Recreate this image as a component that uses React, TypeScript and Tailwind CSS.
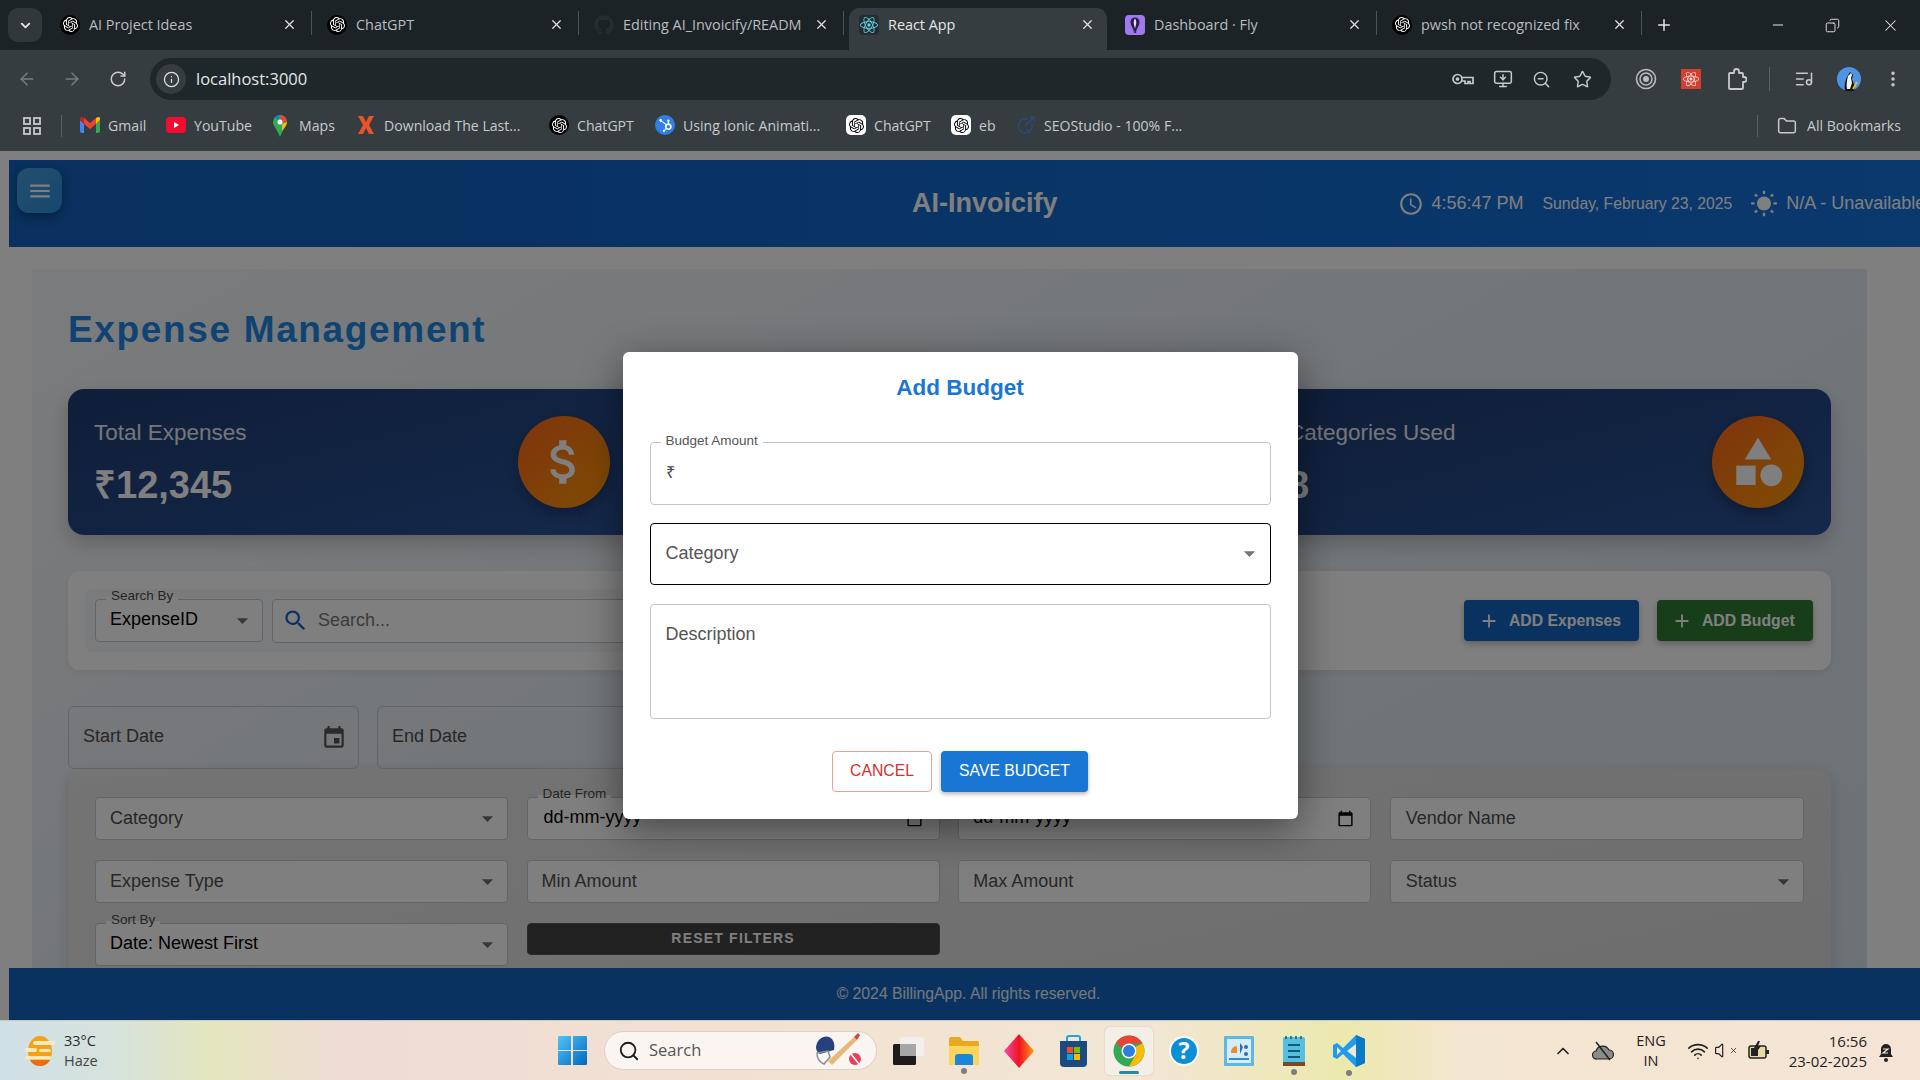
import type { ReactNode } from 'react';
import {
  ArrowLeft,
  ArrowRight,
  ChevronDown,
  ChevronUp,
  Copy,
  EllipsisVertical,
  Folder,
  Info,
  ListMusic,
  Minus,
  MonitorDown,
  Plus,
  RotateCw,
  Search,
  Star,
  Volume,
  Wifi,
  X,
  ZoomOut,
} from 'lucide-react';
import {
  MdAccessTime,
  MdAdd,
  MdArrowDropDown,
  MdAttachMoney,
  MdCalendarToday,
  MdCategory,
  MdEvent,
  MdMenu,
  MdSearch,
  MdWbSunny,
} from 'react-icons/md';
import { FaGithub } from 'react-icons/fa';
import { SiHubspot, SiOpenai, SiReact } from 'react-icons/si';

const UI_FONT = "font-['Open_Sans','Noto_Sans',sans-serif]";

function GptIcon({ light = false }: { light?: boolean }) {
  return (
    <span
      className={
        light
          ? 'flex h-5 w-5 shrink-0 items-center justify-center rounded-[5px] bg-white text-black'
          : 'flex h-5 w-5 shrink-0 items-center justify-center rounded-full bg-black text-white'
      }
    >
      <SiOpenai size={15} />
    </span>
  );
}

function FlyIcon() {
  return (
    <svg width="20" height="20" viewBox="0 0 20 20" className="shrink-0">
      <rect width="20" height="20" rx="4" fill="#a079ec" />
      <path d="M10 2.5c3 0 4.5 2.4 4.5 5 0 3-3 6-3.2 8.5H8.7C8.500 13.500 5.500 10.500 5.500 7.500c0-2.600 1.500-5 4.500-5z" fill="#2a1b4d" />
      <path d="M10 3.500c-.9 1.200-1.300 2.600-1.300 4s.6 3.500 1.300 6c.7-2.500 1.300-4.600 1.300-6s-.4-2.800-1.300-4z" fill="#e6dcfb" />
      <rect x="8.800" y="16.200" width="2.400" height="1.600" fill="#2a1b4d" />
    </svg>
  );
}

function Tab({
  icon,
  title,
  active = false,
  sep = true,
  width = 267,
  inset = 10,
}: {
  icon: ReactNode;
  title: string;
  active?: boolean;
  sep?: boolean;
  width?: number;
  inset?: number;
}) {
  return (
    <div
      className={
        active
          ? 'relative flex h-[42px] shrink-0 items-center rounded-t-[10px] bg-[#353d40] pb-[9px] pr-[12px] text-[#e4e6e7]'
          : 'relative flex h-[42px] shrink-0 items-center pb-[9px] pr-[20px] text-[#b9bdbf]'
      }
      style={{ width, paddingLeft: inset }}
    >
      {icon}
      <span className="ml-[9px] min-w-0 flex-1 overflow-hidden whitespace-nowrap text-[14.400px]">{title}</span>
      <X size={15} strokeWidth={2} className="ml-1 shrink-0 text-[#dfe1e2]" />
      {sep && <span className="absolute right-[5px] top-[3px] h-[24px] w-[1px] bg-[#4b5356]" />}
    </div>
  );
}

function Bookmark({ icon, label, className }: { icon: ReactNode; label: string; className: string }) {
  return (
    <div className={`flex shrink-0 items-center ${className}`}>
      {icon}
      <span className="whitespace-nowrap text-[14.100px] text-[#c6cacc]">{label}</span>
    </div>
  );
}

function ChromeBar() {
  return (
    <div className={`h-[151px] shrink-0 bg-[#353d40] ${UI_FONT}`}>
      <div className="flex h-[50px] items-end bg-[#1b2327] pl-[8px]">
        <div className="mb-[8px] flex h-[34px] w-[34px] shrink-0 items-center justify-center rounded-[10px] bg-[#30383b] text-[#e4e6e7]">
          <ChevronDown size={15} strokeWidth={3} />
        </div>
        <div className="ml-[8px] flex">
          <Tab icon={<GptIcon />} title="AI Project Ideas" />
          <Tab icon={<GptIcon />} title="ChatGPT" />
          <Tab icon={<FaGithub size={20} className="shrink-0 text-[#262d30]" />} title="Editing AI_Invoicify/READM" width={265} />
          <Tab
            active
            sep={false}
            width={258}
            icon={
              <span className="flex h-5 w-5 shrink-0 items-center justify-center rounded-[4px] bg-[#242c30] text-[#63d4ea]">
                <SiReact size={18} />
              </span>
            }
            title="React App"
          />
          <Tab icon={<FlyIcon />} title="Dashboard · Fly" width={275} inset={18} />
          <Tab icon={<GptIcon />} title="pwsh not recognized fix" width={265} />
        </div>
        <Plus size={18} strokeWidth={2} className="mb-[16px] ml-[8px] shrink-0 text-[#e4e6e7]" />
        <Minus size={16} strokeWidth={1.5} className="mb-[17px] ml-[97px] shrink-0 text-[#e4e6e7]" />
        <Copy size={15} strokeWidth={1.5} className="mb-[17px] ml-[39px] shrink-0 scale-x-[-1] text-[#e4e6e7]" />
        <X size={19} strokeWidth={1.3} className="mb-[15px] ml-[41px] shrink-0 text-[#e4e6e7]" />
      </div>

      <div className="flex h-[58px] items-center py-[8px]">
        <ArrowLeft size={20} strokeWidth={1.8} className="ml-[17px] shrink-0 text-[#767c7f]" />
        <ArrowRight size={20} strokeWidth={1.8} className="ml-[25px] shrink-0 text-[#767c7f]" />
        <RotateCw size={18} strokeWidth={2} className="ml-[27px] shrink-0 text-[#c9cccd]" />
        <div className="ml-[23px] flex h-[42px] w-[1461px] shrink-0 items-center rounded-full bg-[#1e272a] pl-[6px]">
          <span className="flex h-[30px] w-[30px] items-center justify-center rounded-full bg-[#353d40] text-[#dfe1e2]">
            <Info size={17} strokeWidth={1.8} />
          </span>
          <span className="ml-[10px] text-[16.500px] text-[#e4e6e7]">localhost:3000</span>
          <svg width="22" height="14" viewBox="0 0 22 14" fill="none" stroke="#c6cacc" strokeWidth="1.700" className="ml-[1145px] shrink-0">
            <circle cx="5.500" cy="7" r="4.500" />
            <circle cx="5.500" cy="7" r="1" fill="#c6cacc" />
            <path d="M10 5.500h11v6h-3V9.500h-2v2h-3V9h-3" />
          </svg>
          <MonitorDown size={20} strokeWidth={1.8} className="ml-[19px] shrink-0 text-[#c6cacc]" />
          <ZoomOut size={19} strokeWidth={1.8} className="ml-[19px] shrink-0 text-[#c6cacc]" />
          <Star size={19} strokeWidth={1.8} className="ml-[22px] shrink-0 text-[#c6cacc]" />
        </div>
        <svg width="22" height="22" viewBox="0 0 22 22" fill="none" stroke="#b9bdbf" className="ml-[24px] shrink-0">
          <circle cx="11" cy="11" r="9.500" strokeWidth="1.600" />
          <circle cx="11" cy="11" r="6" strokeWidth="1.500" />
          <circle cx="11" cy="11" r="3" fill="#b9bdbf" stroke="none" />
        </svg>
        <span className="ml-[24px] flex h-5 w-5 shrink-0 items-center justify-center bg-[#d23f31] text-[#f4d8d4]">
          <SiReact size={16} />
        </span>
        <svg width="20" height="22" viewBox="0 0 20 22" fill="none" stroke="#c6cacc" strokeWidth="1.800" strokeLinejoin="round" className="ml-[26px] shrink-0">
          <path d="M2 6a1 1 0 0 1 1-1h4V3.500a2.500 2.500 0 0 1 5 0V5h3a1 1 0 0 1 1 1v3h1a2.500 2.500 0 0 1 0 5h-1v6a1 1 0 0 1-1 1H3a1 1 0 0 1-1-1z" />
        </svg>
        <span className="ml-[22px] h-[24px] w-[1px] shrink-0 bg-[#596164]" />
        <ListMusic size={20} strokeWidth={1.8} className="ml-[24px] shrink-0 text-[#c6cacc]" />
        <svg width="24" height="24" viewBox="0 0 24 24" className="ml-[23px] shrink-0">
          <circle cx="12" cy="12" r="12" fill="#4f93e6" />
          <path d="M8 24c-1-5 0-10 2-14l3-5 3 3-1 4 3 8-1 4z" fill="#111" />
          <path d="M11 9l3-3 1 2-1 3 1 5-2 6h-3c-1-4 0-9 1-13z" fill="#f4f4f4" />
          <path d="M16 22l4-7" stroke="#e8c020" strokeWidth="2" />
        </svg>
        <EllipsisVertical size={20} strokeWidth={2.2} className="ml-[22px] shrink-0 text-[#c6cacc]" />
      </div>

      <div className="flex h-[42px] items-center pb-[7px]">
        <svg width="18" height="18" viewBox="0 0 18 18" fill="none" stroke="#c6cacc" strokeWidth="1.800" className="ml-[23px] shrink-0">
          <rect x="1" y="1" width="6" height="6" />
          <rect x="11" y="1" width="6" height="6" />
          <rect x="1" y="11" width="6" height="6" />
          <rect x="11" y="11" width="6" height="6" />
        </svg>
        <span className="ml-[20px] mr-[18px] h-[22px] w-[1px] shrink-0 bg-[#596164]" />
        <Bookmark
          className="w-[86px] gap-2"
          label="Gmail"
          icon={
            <svg width="20" height="16" viewBox="0 0 20 16" className="shrink-0">
              <path d="M0 3v11a2 2 0 0 0 2 2h2V7z" fill="#4285f4" />
              <path d="M20 3v11a2 2 0 0 1-2 2h-2V7z" fill="#34a853" />
              <path d="M16 7V1l2-1a2 2 0 0 1 2 3z" fill="#fbbc04" />
              <path d="M4 7V1l6 5 6-5v6l-6 5z" fill="#ea4335" />
              <path d="M0 3a2 2 0 0 1 2-3l2 1v6z" fill="#c5221f" />
            </svg>
          }
        />
        <Bookmark
          className="w-[107px] gap-2"
          label="YouTube"
          icon={
            <svg width="20" height="20" viewBox="0 0 20 20" className="shrink-0">
              <rect y="2" width="20" height="16" rx="4" fill="#f50b32" />
              <path d="M8 7l5 3-5 3z" fill="#fff" />
            </svg>
          }
        />
        <Bookmark
          className="w-[85px] gap-[12px]"
          label="Maps"
          icon={
            <svg width="14" height="22" viewBox="0 0 14 22" className="shrink-0">
              <path d="M7 0a7 7 0 0 1 7 7c0 4-4 7-7 15C4 14 0 11 0 7a7 7 0 0 1 7-7z" fill="#34a853" />
              <path d="M2 2a7 7 0 0 1 5-2l-2 5z" fill="#1a73e8" />
              <path d="M7 0a7 7 0 0 1 7 7H9l-1-3z" fill="#ea4335" />
              <path d="M14 7c0 3-3 6-5 9V9z" fill="#fbbc04" />
              <circle cx="7" cy="7" r="2.500" fill="#fff" />
            </svg>
          }
        />
        <Bookmark
          className="w-[191px] gap-[10px]"
          label="Download The Last..."
          icon={
            <svg width="16" height="20" viewBox="0 0 16 20" className="shrink-0">
              <path d="M0 1h5l3 6 3-6h5l-5 9 5 9h-5l-3-6-3 6H0l5-9z" fill="#e9522a" />
            </svg>
          }
        />
        <Bookmark className="w-[106px] gap-2" label="ChatGPT" icon={<GptIcon />} />
        <Bookmark
          className="w-[191px] gap-2"
          label="Using Ionic Animati..."
          icon={
            <span className="flex h-5 w-5 shrink-0 items-center justify-center rounded-full bg-[#2f7fe8] text-white">
              <SiHubspot size={13} />
            </span>
          }
        />
        <Bookmark className="w-[105px] gap-2" label="ChatGPT" icon={<GptIcon light />} />
        <Bookmark className="w-[65px] gap-2" label="eb" icon={<GptIcon light />} />
        <Bookmark
          className="w-[741px] gap-2"
          label="SEOStudio - 100% F..."
          icon={
            <svg width="20" height="20" viewBox="0 0 20 20" fill="none" stroke="#2b4a80" strokeWidth="1.400" className="shrink-0">
              <path d="M16 9a7 7 0 1 1-5-5" />
              <path d="M9 11l9-9M14 2h4v4M11 14l3 5" />
            </svg>
          }
        />
        <span className="h-[22px] w-[1px] shrink-0 bg-[#596164]" />
        <Folder size={20} strokeWidth={1.8} className="ml-[19px] shrink-0 text-[#c6cacc]" />
        <span className="ml-[10px] whitespace-nowrap text-[14.100px] text-[#c6cacc]">All Bookmarks</span>
      </div>
    </div>
  );
}

function AppHeader() {
  return (
    <header className="flex h-[87px] shrink-0 items-center overflow-hidden bg-[linear-gradient(90deg,#1260bc,#1472dc)] text-white">
      <h1 className="ml-[903px] shrink-0 text-[27px] font-bold">AI-Invoicify</h1>
      <MdAccessTime size={26} className="ml-[340px] shrink-0" />
      <span className="ml-[8px] shrink-0 text-[18px]">4:56:47 PM</span>
      <span className="ml-[19px] shrink-0 text-[15.750px]">Sunday, February 23, 2025</span>
      <MdWbSunny size={28} className="ml-[18px] shrink-0" />
      <span className="ml-[8px] shrink-0 whitespace-nowrap text-[18px]">N/A - Unavailable</span>
    </header>
  );
}

function StatCard({ label, value, icon }: { label: string; value: string; icon: ReactNode }) {
  return (
    <div className="flex h-[146px] w-[569px] shrink-0 items-center justify-between rounded-[16px] bg-gradient-to-br from-[#1e3c72] to-[#2a5298] pl-[26px] pr-[27px] shadow-[0_8px_20px_rgba(0,0,0,0.2)]">
      <div className="flex flex-col text-white">
        <span className="mt-[1px] text-[22.500px] leading-[26px] text-white/90">{label}</span>
        <span className="mt-[18px] text-[38px] font-bold leading-[42px]">{value}</span>
      </div>
      <span className="flex h-[92px] w-[92px] shrink-0 items-center justify-center rounded-full bg-gradient-to-br from-[#ff6518] to-[#ff9a04] text-white shadow-[0_6px_14px_rgba(0,0,0,0.3)]">
        {icon}
      </span>
    </div>
  );
}

function OutlineField({
  label,
  value,
  placeholder,
  select = false,
  calendar = false,
  className = '',
}: {
  label?: string;
  value?: string;
  placeholder?: string;
  select?: boolean;
  calendar?: boolean;
  className?: string;
}) {
  return (
    <div
      className={`relative flex h-[43px] items-center rounded-[4px] border border-[#c8c8c8] bg-white pl-[14px] pr-[6px] text-[18px] ${className}`}
    >
      {label && (
        <span className="absolute left-[10px] top-[-13px] bg-[linear-gradient(transparent_55%,white_55%)] px-[5px] text-[13.500px] leading-[18px] text-[#4a4a4a]">
          {label}
        </span>
      )}
      {value && <span className="pb-[3px] text-black">{value}</span>}
      {placeholder && <span className="text-[#4f4f4f]">{placeholder}</span>}
      {select && <MdArrowDropDown size={27} className="ml-auto shrink-0 text-[#6f6f6f]" />}
      {calendar && <MdCalendarToday size={17} className="ml-auto mr-[10px] shrink-0 text-black" />}
    </div>
  );
}

function ExpensePage() {
  return (
    <main className="min-h-0 flex-1 overflow-hidden pl-[23px] pr-[53px] pt-[22px]">
      <div className="h-[1000px] bg-gradient-to-br from-[#f5f7fa] to-[#d4e0ea] px-[36px] pt-[40px]">
        <h2 className="h-[40px] text-[37px] font-bold leading-[42px] tracking-[1.650px] text-[#1e88e5]">Expense Management</h2>

        <div className="mt-[40px] flex justify-between">
          <StatCard label="Total Expenses" value="₹12,345" icon={<MdAttachMoney size={58} />} />
          <div className="h-[146px] w-[569px] shrink-0 rounded-[16px] bg-[#1e3c72]" />
          <StatCard label="Categories Used" value="8" icon={<MdCategory size={58} />} />
        </div>

        <div className="mt-[36px] flex h-[99px] items-center rounded-[12px] bg-white pl-[17px] pr-[18px] shadow-[0_2px_8px_rgba(0,0,0,0.08)]">
          <div className="flex h-[63px] w-[600px] items-center rounded-[8px] bg-[#f5f7f9] pl-[10px]">
            <OutlineField className="h-[42px] w-[168px] shrink-0 bg-transparent" label="Search By" value="ExpenseID" select />
            <div className="ml-[9px] flex h-[44px] w-[400px] shrink-0 items-center rounded-[4px] border border-[#c8c8c8] bg-white pl-[9px] text-[18px] text-[#777]">
              <MdSearch size={27} className="shrink-0 text-[#1565c0]" />
              <span className="ml-[9px]">Search...</span>
            </div>
          </div>
          <button className="ml-auto flex h-[41px] w-[175px] items-center gap-[9px] rounded-[4px] bg-[#1565c0] pl-[14px] text-[15.750px] font-bold text-white shadow-[0_3px_6px_rgba(0,0,0,0.25)]">
            <MdAdd size={22} className="shrink-0" />
            ADD Expenses
          </button>
          <button className="ml-[18px] flex h-[41px] w-[156px] items-center gap-[9px] rounded-[4px] bg-[#2e7d32] pl-[14px] text-[15.750px] font-bold text-white shadow-[0_3px_6px_rgba(0,0,0,0.25)]">
            <MdAdd size={22} className="shrink-0" />
            ADD Budget
          </button>
        </div>

        <div className="mt-[36px] flex h-[63px] gap-[18px]">
          <div className="flex w-[291px] items-center rounded-[6px] border border-[#c4c8cc] pl-[14px] pr-[11px] text-[18px] text-[#4f4f4f]">
            <span className="pb-[2px]">Start Date</span>
            <MdEvent size={26} className="ml-auto shrink-0 text-[#555]" />
          </div>
          <div className="flex w-[291px] items-center rounded-[6px] border border-[#c4c8cc] pb-[2px] pl-[14px] text-[18px] text-[#4f4f4f]">End Date</div>
        </div>

        <section className="h-[400px] rounded-[16px] bg-gradient-to-br from-[#e8e8e8] to-[#d8d8d8] px-[27px] pt-[28px] shadow-[0_4px_14px_rgba(0,0,0,0.15)]">
          <div className="grid grid-cols-[413px_413px_413px_414px] gap-x-[18.600px] gap-y-[20px]">
            <OutlineField placeholder="Category" select />
            <OutlineField className="pl-[16px]" label="Date From" value="dd-mm-yyyy" calendar />
            <OutlineField value="dd-mm-yyyy" calendar />
            <OutlineField className="pl-[15px]" placeholder="Vendor Name" />
            <OutlineField placeholder="Expense Type" select />
            <OutlineField placeholder="Min Amount" />
            <OutlineField placeholder="Max Amount" />
            <OutlineField className="pl-[15px]" placeholder="Status" select />
            <OutlineField label="Sort By" value="Date: Newest First" select />
            <button className="h-[32px] rounded-[4px] border border-[#555] bg-[#424242] pb-[2px] text-[14px] font-bold tracking-[1.200px] text-white">RESET FILTERS</button>
          </div>
        </section>
      </div>
    </main>
  );
}

function BudgetModal() {
  return (
    <div className="absolute inset-0 flex items-center justify-center bg-black/50">
      <div className="flex h-[467px] w-[675px] flex-col rounded-[6px] bg-white px-[27px] pt-[21px] shadow-[0_10px_40px_rgba(0,0,0,0.45)]">
        <h3 className="h-[30px] text-center text-[22.500px] font-bold leading-[30px] text-[#1976d2]">Add Budget</h3>

        <div className="relative mt-[39px] flex h-[63px] items-center rounded-[4px] border border-[#c4c4c4] pb-[3px] pl-[15px] text-[16.500px] text-[#444]">
          <span className="absolute left-[10px] top-[-11px] bg-white px-[5px] text-[13.500px] leading-[18px] text-[#555]">Budget Amount</span>
          ₹
        </div>

        <div className="mt-[18px] flex h-[62px] items-center rounded-[4px] border-[1.500px] border-black pb-[2px] pl-[15px] pr-[7px] text-[18px] text-[#555]">
          Category
          <MdArrowDropDown size={27} className="ml-auto shrink-0 text-[#757575]" />
        </div>

        <div className="mt-[19px] h-[115px] rounded-[4px] border border-[#c4c4c4] pl-[15px] pt-[17px] text-[18px] leading-[24px] text-[#555]">Description</div>

        <div className="mt-[32px] flex justify-center gap-[9px]">
          <button className="h-[41px] w-[100px] rounded-[4px] border border-[#e8a0a0] pb-[2px] text-[15.750px] text-[#d32f2f]">CANCEL</button>
          <button className="h-[41px] w-[147px] rounded-[4px] bg-[#1976d2] pb-[2px] text-[15.750px] text-white shadow-[0_2px_4px_rgba(0,0,0,0.3)]">SAVE BUDGET</button>
        </div>
      </div>
    </div>
  );
}

function TaskDot() {
  return <span className="absolute bottom-[-9px] left-1/2 h-[6px] w-[6px] -translate-x-1/2 rounded-full bg-[#7d7d7d]" />;
}

function Taskbar() {
  return (
    <footer
      className={`flex h-[60px] shrink-0 items-center border-t border-[#cfc8c0] bg-[linear-gradient(90deg,#cfe0e6_0%,#d6e2dc_6%,#e4e6bf_11%,#efdcd5_18%,#f3e3d2_45%,#f1e6d4_60%,#ece9ae_70%,#f3e6d0_76%,#f5e4d6_100%)] ${UI_FONT}`}
    >
      <div className="flex w-[558px] shrink-0 items-center pl-[25px]">
        <svg width="30" height="32" viewBox="0 0 30 32" className="shrink-0">
          <ellipse cx="15" cy="16" rx="12" ry="15" fill="#f7a010" />
          <path d="M5 25h20c-2 4-6 6-10 6s-8-2-10-6z" fill="#ee6c10" />
          <rect x="8" y="6" width="22" height="4" rx="2" fill="#fde8c0" />
          <rect x="0" y="13" width="12" height="4" rx="2" fill="#fde8c0" />
          <rect x="14" y="14" width="12" height="3" rx="1.500" fill="#fde8c0" />
          <rect x="0" y="21" width="26" height="3.500" rx="1.700" fill="#fde8c0" />
        </svg>
        <div className="ml-[9px] flex flex-col text-[14.500px] leading-[20px] text-[#2b2b2b]">
          <span>33°C</span>
          <span className="text-[#444]">Haze</span>
        </div>
      </div>
      <svg width="29" height="29" viewBox="0 0 29 29" className="shrink-0">
        <defs>
          <linearGradient id="win" x1="0" y1="0" x2="1" y2="1">
            <stop offset="0" stopColor="#52c4f7" />
            <stop offset="1" stopColor="#0067c0" />
          </linearGradient>
        </defs>
        <path d="M0 1a1 1 0 0 1 1-1h12v14H0zM15 0h13a1 1 0 0 1 1 1v13H15zM0 15h13v14H1a1 1 0 0 1-1-1zM15 15h14v13a1 1 0 0 1-1 1H15z" fill="url(#win)" />
      </svg>
      <div className="ml-[17px] flex h-[39px] w-[273px] shrink-0 items-center rounded-full border border-[#dccfc4] bg-[#faf5f0] pl-[13px]">
        <Search size={22} strokeWidth={2} className="shrink-0 text-[#1d1d1d]" />
        <span className="ml-[9px] text-[16.500px] text-[#555]">Search</span>
        <svg width="50" height="36" viewBox="0 0 50 36" className="ml-auto mr-[12px] shrink-0">
          <path d="M2 14C3 6 10 2 15 4c5 2 6 8 5 13l-14 4c-3-2-4-4-4-7z" fill="#27407e" />
          <path d="M3 20l11-2 2 6-6 7c-5-2-7-6-7-11z" fill="none" stroke="#8b9097" strokeWidth="1.500" />
          <path d="M18 32l-4-4L40 4l3 3z" fill="#e9b779" />
          <path d="M40 4l4-4 2 2-3 5z" fill="#d9403a" />
          <circle cx="41" cy="26" r="6" fill="#e6405e" />
          <path d="M37 21l8 10" stroke="#fff" strokeWidth="1.500" />
        </svg>
      </div>
      <svg width="31" height="28" viewBox="0 0 31 28" className="ml-[16px] shrink-0">
        <rect x="7" y="0" width="24" height="19" rx="1.500" fill="#f2efec" />
        <rect x="0" y="7" width="23" height="21" rx="1.500" fill="#1c1c1c" />
        <rect x="7" y="7" width="16" height="12" fill="#a6a6a6" />
      </svg>
      <div className="relative ml-[25px] shrink-0">
        <svg width="30" height="28" viewBox="0 0 30 28">
          <path d="M0 2a2 2 0 0 1 2-2h9l3 4h14a2 2 0 0 1 2 2v20a2 2 0 0 1-2 2H2a2 2 0 0 1-2-2z" fill="#e9a91f" />
          <path d="M0 9h30v17a2 2 0 0 1-2 2H2a2 2 0 0 1-2-2z" fill="#fbd65c" />
          <path d="M6 20a3 3 0 0 1 3-3h12a3 3 0 0 1 3 3v8H6z" fill="#1a86d9" />
        </svg>
        <TaskDot />
      </div>
      <svg width="30" height="34" viewBox="0 0 30 34" className="ml-[25px] shrink-0">
        <defs>
          <linearGradient id="gem" x1="0" y1="0" x2="1" y2="0">
            <stop offset="0" stopColor="#f04ea4" />
            <stop offset="0.500" stopColor="#f01224" />
            <stop offset="1" stopColor="#ff9810" />
          </linearGradient>
        </defs>
        <path d="M15 0l15 17-15 17L0 17z" fill="url(#gem)" />
      </svg>
      <svg width="29" height="32" viewBox="0 0 29 32" className="ml-[25px] shrink-0">
        <path d="M8 7V3a2 2 0 0 1 2-2h9a2 2 0 0 1 2 2v4" fill="none" stroke="#25a5dd" strokeWidth="2" />
        <path d="M1 6h27v22a4 4 0 0 1-4 4H5a4 4 0 0 1-4-4z" fill="#1b4a80" />
        <rect x="8" y="12" width="6" height="6" fill="#f25022" />
        <rect x="15" y="12" width="6" height="6" fill="#7fba00" />
        <rect x="8" y="19" width="6" height="6" fill="#00a4ef" />
        <rect x="15" y="19" width="6" height="6" fill="#ffb900" />
      </svg>
      <div className="relative ml-[17px] flex h-[48px] w-[48px] shrink-0 items-center justify-center rounded-[5px] bg-[#f3efe6] shadow-[0_0_2px_rgba(0,0,0,0.15)]">
        <svg width="32" height="32" viewBox="0 0 32 32">
          <circle cx="16" cy="16" r="15.500" fill="#34a853" />
          <path d="M16 .5A15.500 15.500 0 0 1 29.500 8.500H16a7.500 7.500 0 0 0-7 4.500L3 8A15.500 15.500 0 0 1 16 .5z" fill="#ea4335" />
          <path d="M29.500 8.500A15.500 15.500 0 0 1 16 31.500l6.500-11.500A7.500 7.500 0 0 0 22 12z" fill="#fbbc04" />
          <circle cx="16" cy="16" r="7.500" fill="#fff" />
          <circle cx="16" cy="16" r="6" fill="#2f7de1" />
        </svg>
        <span className="absolute bottom-[1px] left-[14px] h-[3px] w-[20px] rounded-[2px] bg-[#2a8a9c]" />
      </div>
      <span className="ml-[16px] flex h-[30px] w-[30px] shrink-0 items-center justify-center rounded-full border-[2px] border-white bg-[#0d8fd8] text-[23px] font-bold leading-none text-white">?</span>
      <svg width="30" height="30" viewBox="0 0 30 30" className="ml-[25px] shrink-0">
        <rect width="30" height="30" rx="1" fill="#5fb7e8" />
        <rect x="3" y="3" width="24" height="24" fill="#d6ecf8" />
        <path d="M7 17a6 6 0 0 1 6-7v7z" fill="#e89030" />
        <path d="M16 7l3 4-3 7z" fill="#2c6fb0" />
        <circle cx="22" cy="11" r="2" fill="#2c6fb0" />
        <circle cx="22" cy="18" r="2" fill="#2c6fb0" />
        <rect x="5" y="22" width="20" height="2" fill="#2c8fc8" />
      </svg>
      <div className="relative ml-[29px] shrink-0">
        <svg width="22" height="30" viewBox="0 0 22 30">
          <rect y="1" width="22" height="27" rx="2" fill="#56bfe0" />
          <rect y="26" width="22" height="4" fill="#7a4a28" />
          <rect x="5" y="8" width="12" height="2" fill="#125a78" />
          <rect x="5" y="14" width="12" height="2" fill="#125a78" />
          <rect x="5" y="20" width="12" height="2" fill="#125a78" />
          <path d="M3 0v3M8 0v3M13 0v3M18 0v3" stroke="#125a78" strokeWidth="1.500" />
        </svg>
        <TaskDot />
      </div>
      <div className="relative ml-[28px] shrink-0">
        <svg width="32" height="32" viewBox="0 0 32 32">
          <path d="M23 0l9 4v24l-9 4-13-13-6 5-4-2V10l4-2 6 5z" fill="#1f9cf0" />
          <path d="M23 0v32l9-4V4z" fill="#0a7ac8" />
          <path d="M23 9l-9 7 9 7zM4 12v8l4-4z" fill="#f1e7d6" />
        </svg>
        <TaskDot />
      </div>
      <ChevronUp size={20} strokeWidth={2} className="ml-[188px] shrink-0 text-[#222]" />
      <svg width="22" height="22" viewBox="0 0 22 22" className="ml-[19px] shrink-0">
        <path d="M5 19a4 4 0 0 1-1-8 7 7 0 0 1 13-1 4.500 4.500 0 0 1 0 9z" fill="#8a8a8a" stroke="#222" strokeWidth="1.200" />
        <path d="M4 2l14 18" stroke="#222" strokeWidth="1.500" />
      </svg>
      <div className="ml-[23px] flex w-[28px] shrink-0 flex-col items-center text-[14.500px] leading-[20px] text-[#222]">
        <span>ENG</span>
        <span>IN</span>
      </div>
      <Wifi size={22} strokeWidth={1.800} className="ml-[22px] shrink-0 text-[#222]" />
      <Volume size={19} strokeWidth={1.500} className="ml-[5px] shrink-0 text-[#222]" />
      <X size={9} strokeWidth={2} className="ml-[-4px] shrink-0 text-[#222]" />
      <svg width="22" height="20" viewBox="0 0 22 20" className="ml-[10px] shrink-0">
        <rect x="1" y="5" width="17" height="12" rx="2" fill="#e8d9a0" stroke="#222" strokeWidth="1.500" />
        <rect x="3" y="7" width="7" height="8" fill="#222" />
        <rect x="18" y="9" width="3" height="4" fill="#222" />
        <path d="M10 0L6 7h3l-2 6 6-8h-3l2-5z" fill="#222" />
      </svg>
      <div className="ml-[17px] flex w-[80px] shrink-0 flex-col items-end text-[15px] leading-[20px] text-[#222]">
        <span>16:56</span>
        <span className="whitespace-nowrap">23-02-2025</span>
      </div>
      <svg width="16" height="22" viewBox="0 0 16 22" className="ml-[11px] shrink-0">
        <path d="M8 4a5 5 0 0 1 5 5v5l2 3H1l2-3V9a5 5 0 0 1 5-5z" fill="#222" />
        <circle cx="8" cy="20" r="2" fill="#222" />
        <path d="M5 9h5l-5 4h5" stroke="#f3e3d2" strokeWidth="1.200" fill="none" />
      </svg>
    </footer>
  );
}

export default function App() {
  return (
    <div className="flex h-screen w-[1920px] flex-col overflow-hidden bg-white font-['Liberation_Sans',Arial,sans-serif]">
      <ChromeBar />
      <div className="relative flex min-h-0 flex-1 flex-col overflow-hidden pl-[9px] pt-[9px]">
        <AppHeader />
        <span className="absolute left-[17px] top-[17px] flex h-[45px] w-[45px] items-center justify-center rounded-[12px] bg-gradient-to-br from-[#4a9cd8] to-[#2a8fe0] text-white shadow-[0_4px_10px_rgba(0,0,0,0.3)]">
          <MdMenu size={26} />
        </span>
        <ExpensePage />
        <div className="flex h-[52px] shrink-0 items-center justify-center bg-[#1565c0] pl-[8px] text-[15.750px] text-white/90">
          © 2024 BillingApp. All rights reserved.
        </div>
        <BudgetModal />
      </div>
      <Taskbar />
    </div>
  );
}
